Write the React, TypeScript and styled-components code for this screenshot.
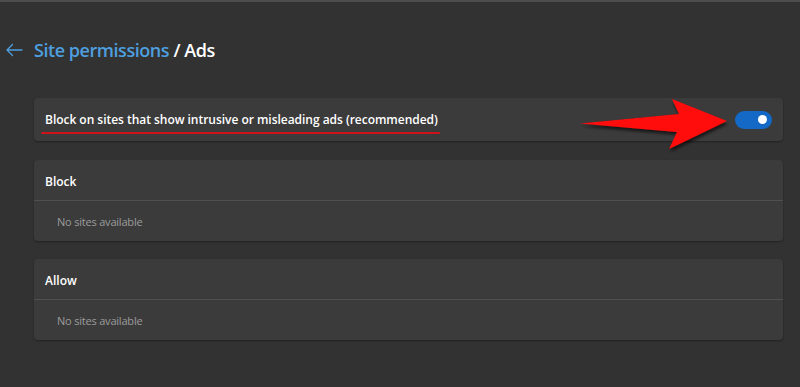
import React from "react";
import styled, { createGlobalStyle } from "styled-components";

const Global = createGlobalStyle`
  html, body { margin: 0; padding: 0; background: #323232; }
  body { font-family: "Open Sans", "Noto Sans", sans-serif; }
`;

const Page = styled.div`
  width: 800px;
  height: 387px;
  background: #323232;
  border-top: 2px solid #4d4d4d;
  box-sizing: border-box;
  position: relative;
  overflow: hidden;
`;

const Header = styled.div`
  display: flex;
  align-items: center;
  height: 30px;
  margin-top: 33px;
  padding-left: 5px;
  gap: 11px;
`;

const Title = styled.h1`
  margin: 0;
  font-size: 18px;
  font-weight: 600;
  color: #ffffff;
  letter-spacing: -0.45px;
`;

const Crumb = styled.span`
  color: #4e9fdf;
`;

const Content = styled.div`
  display: flex;
  flex-direction: column;
  margin: 33px 17px 0 34px;
`;

const Card = styled.div<{ $gap?: number }>`
  background: #3b3b3b;
  border-radius: 4px;
  box-shadow: 0 1px 2px rgba(0, 0, 0, 0.35);
  margin-top: ${(p) => p.$gap ?? 0}px;
`;

const ToggleRow = styled.div`
  display: flex;
  align-items: center;
  justify-content: space-between;
  height: 43px;
  padding: 0 11px 0 11px;
`;

const RowLabel = styled.span`
  position: relative;
  font-size: 12px;
  font-weight: 600;
  color: #ffffff;
  letter-spacing: -0.03px;
  &::after {
    content: "";
    position: absolute;
    left: -4px;
    right: -2px;
    bottom: -6px;
    height: 2px;
    border-radius: 1px;
    background: #d0121b;
  }
`;

const Switch = styled.div`
  width: 37px;
  height: 18px;
  border-radius: 9px;
  background: #1369c5;
  display: flex;
  align-items: center;
  justify-content: flex-end;
  padding-right: 5px;
  box-sizing: border-box;
`;

const Knob = styled.div`
  width: 9px;
  height: 9px;
  border-radius: 50%;
  background: #ffffff;
`;

const SectionHead = styled.div`
  height: 41px;
  padding-top: 2px;
  box-sizing: border-box;
  display: flex;
  align-items: center;
  padding-left: 11px;
  font-size: 12px;
  font-weight: 600;
  color: #ffffff;
  border-bottom: 1px solid #505050;
`;

const Empty = styled.div`
  height: 40px;
  display: flex;
  align-items: center;
  padding-left: 23px;
  font-size: 11px;
  color: #9c9c9c;
  letter-spacing: -0.2px;
`;

const ArrowSvg = styled.svg`
  position: absolute;
  left: 0;
  top: 0;
  pointer-events: none;
`;

export default function App() {
  return (
    <>
      <Global />
      <Page>
        <Header>
          <svg width="18" height="14" viewBox="0 0 18 14" fill="none">
            <path d="M17 7H2M7.5 1.5L2 7l5.5 5.5" stroke="#4e9fdf" strokeWidth="1.3" strokeLinecap="round" strokeLinejoin="round" />
          </svg>
          <Title>
            <Crumb>Site permissions</Crumb> / Ads
          </Title>
        </Header>
        <Content>
          <Card>
            <ToggleRow>
              <RowLabel>Block on sites that show intrusive or misleading ads (recommended)</RowLabel>
              <Switch>
                <Knob />
              </Switch>
            </ToggleRow>
          </Card>
          <Card $gap={19}>
            <SectionHead>Block</SectionHead>
            <Empty>No sites available</Empty>
          </Card>
          <Card $gap={18}>
            <SectionHead>Allow</SectionHead>
            <Empty>No sites available</Empty>
          </Card>
        </Content>
        <ArrowSvg width="800" height="387" viewBox="0 0 800 387">
          <defs>
            <filter id="sh" x="-10%" y="-30%" width="130%" height="170%">
              <feDropShadow dx="1" dy="3" stdDeviation="1.5" floodColor="#000" floodOpacity="0.6" />
            </filter>
          </defs>
          <path
            d="M580 121.5 L679 112 L672 97 L727 119 L669 147 L677 130 Z"
            fill="#ff0a0a"
            filter="url(#sh)"
          />
        </ArrowSvg>
      </Page>
    </>
  );
}
